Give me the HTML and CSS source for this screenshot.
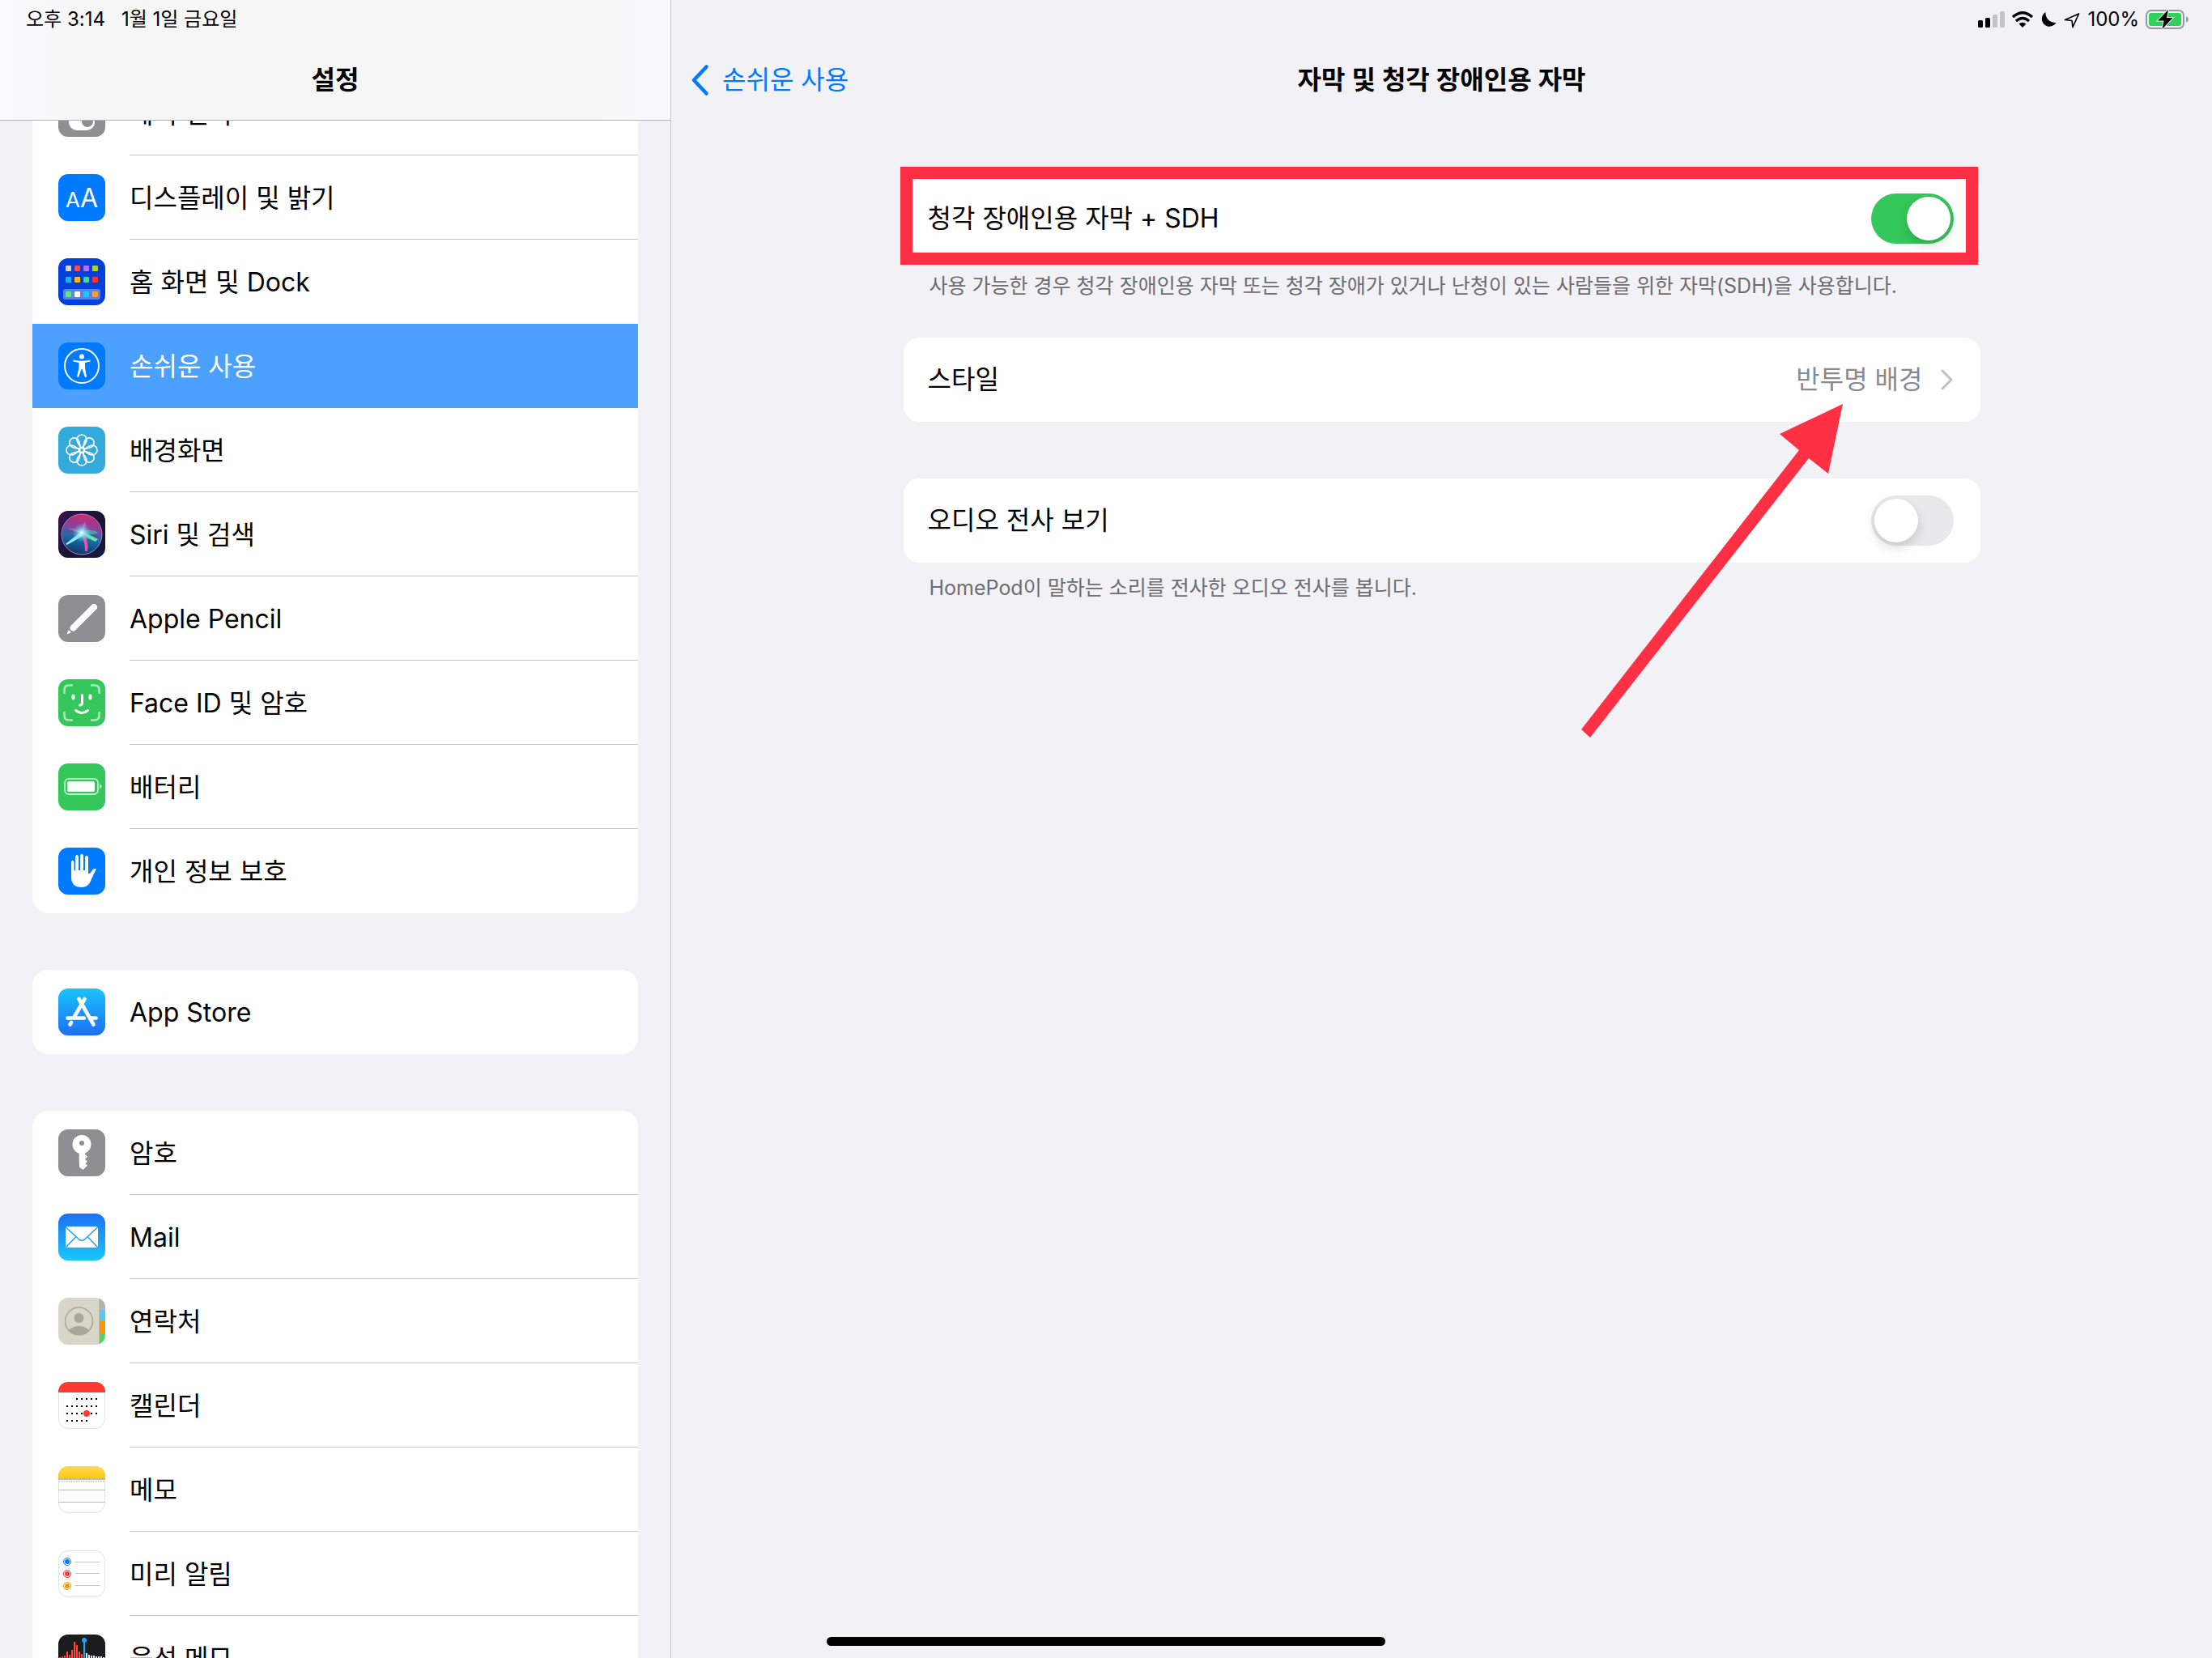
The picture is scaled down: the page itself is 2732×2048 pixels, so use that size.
FILE: index.html
```html
<!DOCTYPE html>
<html lang="ko">
<head>
    <meta charset="UTF-8">
    <meta name="viewport" content="width=device-width, initial-scale=1.0">
    <title>설정 - 자막 및 청각 장애인용 자막</title>
    <link rel="stylesheet" href="styles.css">
</head>
<body>
    <div class="screen">
        <aside class="sidebar">
            <header class="sidebar-header">
                <div class="status-bar">
                    <span>오후 3:14</span>
                    <span>1월 1일 금요일</span>
                </div>
                <h1 class="title">설정</h1>
            </header>
            <nav class="menu">
                <ul class="group group-scrolled">
                    <li><a class="item" href="#">
                        <svg class="icon" viewBox="0 0 58 58"><rect width="58" height="58" rx="12" fill="#8e8e93"/><rect x="13" y="30" width="32" height="20" rx="10" fill="#fff"/><circle cx="36" cy="39" r="7" fill="#8e8e93"/></svg>
                        <span class="label">제어 센터</span>
                    </a></li>
                    <li><a class="item" href="#">
                        <svg class="icon" viewBox="0 0 58 58"><rect width="58" height="58" rx="12" fill="#007aff"/><text x="9" y="41" font-size="26" fill="#fff">A</text><text x="27" y="41" font-size="32" fill="#fff">A</text></svg>
                        <span class="label">디스플레이 및 밝기</span>
                    </a></li>
                    <li><a class="item" href="#">
                        <svg class="icon" viewBox="0 0 58 58">
                            <rect width="58" height="58" rx="12" fill="#0440dc"/>
                            <rect x="6" y="38" width="46" height="13" rx="3" fill="#5b82e8"/>
                            <g>
                                <rect x="9" y="9" width="7" height="7" rx="1" fill="#d8d4cb"/><rect x="20" y="9" width="7" height="7" rx="1" fill="#fb4a5e"/><rect x="31" y="9" width="7" height="7" rx="1" fill="#bf6bf5"/><rect x="42" y="9" width="7" height="7" rx="1" fill="#b0d038"/>
                                <rect x="9" y="23" width="7" height="7" rx="1" fill="#12b8fb"/><rect x="20" y="23" width="7" height="7" rx="1" fill="#fdbc0a"/><rect x="31" y="23" width="7" height="7" rx="1" fill="#3bdc9b"/><rect x="42" y="23" width="7" height="7" rx="1" fill="#fb3430"/>
                                <rect x="9" y="41" width="7" height="7" rx="1" fill="#54ee6c"/><rect x="20" y="41" width="7" height="7" rx="1" fill="#fff"/><rect x="31" y="41" width="7" height="7" rx="1" fill="#12d0fb"/><rect x="42" y="41" width="7" height="7" rx="1" fill="#fd9a44"/>
                            </g>
                        </svg>
                        <span class="label">홈 화면 및 Dock</span>
                    </a></li>
                    <li><a class="item selected" href="#" aria-current="page">
                        <svg class="icon" viewBox="0 0 58 58"><rect width="58" height="58" rx="12" fill="#007aff"/><circle cx="29" cy="29" r="21" fill="none" stroke="#fff" stroke-width="2"/><circle cx="29" cy="17.500" r="3" fill="#fff"/><path d="M18.500 21.500Q29 24 39.500 21.500V23.500L33 25V31L35 42.500L33 43L29.500 33H28.500L25 43L23 42.500L25.500 31V25L18.500 23.500Z" fill="#fff"/></svg>
                        <span class="label">손쉬운 사용</span>
                    </a></li>
                    <li><a class="item" href="#">
                        <svg class="icon" viewBox="0 0 58 58">
                            <rect width="58" height="58" rx="12" fill="#34aadc"/>
                            <g fill="none" stroke="#fff" stroke-width="1.700">
                                <circle cx="29" cy="29" r="3"/>
                                <path id="petal" d="M29 26.500C25 22 23 19 23 16A6 6 0 0 1 35 16C35 19 33 22 29 26.500Z"/>
                                <use href="#petal" transform="rotate(45 29 29)"/><use href="#petal" transform="rotate(90 29 29)"/><use href="#petal" transform="rotate(135 29 29)"/><use href="#petal" transform="rotate(180 29 29)"/><use href="#petal" transform="rotate(225 29 29)"/><use href="#petal" transform="rotate(270 29 29)"/><use href="#petal" transform="rotate(315 29 29)"/>
                            </g>
                        </svg>
                        <span class="label">배경화면</span>
                    </a></li>
                    <li><a class="item" href="#">
                        <svg class="icon" viewBox="0 0 58 58">
                            <defs>
                                <linearGradient id="siri-bg" x1="0" y1="0" x2="1" y2="1"><stop offset="0" stop-color="#3c1050"/><stop offset=".5" stop-color="#1c1238"/><stop offset="1" stop-color="#101c3c"/></linearGradient>
                                <linearGradient id="siri-orb" x1=".6" y1="0" x2=".4" y2="1"><stop offset="0" stop-color="#d02870"/><stop offset=".35" stop-color="#86429c"/><stop offset=".6" stop-color="#1c6ca8"/><stop offset="1" stop-color="#143468"/></linearGradient>
                                <radialGradient id="siri-glow"><stop offset="0" stop-color="#fff"/><stop offset=".3" stop-color="#9ff0f8" stop-opacity=".8"/><stop offset="1" stop-color="#40c0e0" stop-opacity="0"/></radialGradient>
                            </defs>
                            <rect width="58" height="58" rx="12" fill="url(#siri-bg)"/>
                            <circle cx="29" cy="29" r="25" fill="url(#siri-orb)" stroke="#9a8cb4" stroke-width="1"/>
                            <path d="M29 26Q40 21 50 27Q40 31 29 28Z" fill="#3cc8b0" opacity=".7"/>
                            <path d="M29 25L9 41L11 42L30 31Z" fill="#8ff0ff"/>
                            <path d="M29 25L49 35L46 38L28 30Z" fill="#58e8b0"/>
                            <path d="M28 27Q33 38 33 50L36 50Q38 38 31 26Z" fill="#f050a8"/>
                            <path d="M28 27Q20 20 12 22Q20 26 28 27ZM30 27Q28 18 34 13Q34 22 30 27Z" fill="#e868b8" opacity=".6"/>
                            <circle cx="29" cy="27" r="12" fill="url(#siri-glow)"/>
                        </svg>
                        <span class="label">Siri 및 검색</span>
                    </a></li>
                    <li><a class="item" href="#">
                        <svg class="icon" viewBox="0 0 58 58"><rect width="58" height="58" rx="12" fill="#8e8e93"/><path d="M18.500 40.500L44 15" stroke="#fff" stroke-width="8" stroke-linecap="round"/><path d="M10.500 48.500L12.500 43.500Q15 43.500 15.500 46.500Z" fill="#fff"/></svg>
                        <span class="label">Apple Pencil</span>
                    </a></li>
                    <li><a class="item" href="#">
                        <svg class="icon" viewBox="0 0 58 58">
                            <rect width="58" height="58" rx="12" fill="#34c759"/>
                            <g fill="none" stroke="#fff" stroke-linecap="round">
                                <path d="M7.500 18V13Q7.500 7.500 13 7.500H18M40 7.500H45Q50.500 7.500 50.500 13V18M50.500 40V45Q50.500 50.500 45 50.500H40M18 50.500H13Q7.500 50.500 7.500 45V40" stroke-width="2.500" stroke-linecap="butt" opacity=".6"/>
                                <path d="M18.500 20.500V23.500M39.500 20.500V23.500" stroke-width="4"/>
                                <path d="M29.500 19.500V29.500Q29.500 32 26.500 32" stroke-width="3"/>
                                <path d="M21.500 38.500Q29 44.500 36.500 38.500" stroke-width="3"/>
                            </g>
                        </svg>
                        <span class="label">Face ID 및 암호</span>
                    </a></li>
                    <li><a class="item" href="#">
                        <svg class="icon" viewBox="0 0 58 58"><rect width="58" height="58" rx="12" fill="#34c759"/><rect x="8" y="19" width="41" height="19" rx="5" fill="none" stroke="#fff" stroke-width="1.800" opacity=".7"/><rect x="11" y="22" width="34" height="13" rx="2.500" fill="#fff"/><path d="M51 25.500Q53.500 26.500 53.500 28.500T51 31.500Z" fill="#fff" opacity=".7"/></svg>
                        <span class="label">배터리</span>
                    </a></li>
                    <li><a class="item" href="#">
                        <svg class="icon" viewBox="0 0 58 58"><rect width="58" height="58" rx="12" fill="#007aff"/><path d="M16 17.500Q17.500 14 19.500 17.500V28H21V11Q23 7 25 11V28H27V9.500Q29 6 31 9.500V28H33V11.500Q35 8 37 11.500V32Q39 33 41.500 28.500Q44 25 47 26.500Q43 34 40.500 40Q37.500 49 28.500 49Q16.500 49 16 37Z" fill="#fff"/></svg>
                        <span class="label">개인 정보 보호</span>
                    </a></li>
                </ul>

                <ul class="group">
                    <li><a class="item" href="#">
                        <svg class="icon" viewBox="0 0 58 58">
                            <defs><linearGradient id="store" x1="0" y1="0" x2="0" y2="1"><stop offset="0" stop-color="#1ac4fc"/><stop offset="1" stop-color="#1d6ff2"/></linearGradient></defs>
                            <rect width="58" height="58" rx="12" fill="url(#store)"/>
                            <g stroke="#fff" stroke-width="4.600" stroke-linecap="round"><path d="M32.500 13L19.500 35.500M16 42L14.500 44.500M25.500 13L43.500 44.500"/><path d="M11.500 36.500H32M40 36.500H46.500"/></g>
                            <path d="M31 24L38.500 37" stroke="#1c94f8" stroke-width="1" transform="translate(-2.500 1.500)"/>
                        </svg>
                        <span class="label">App Store</span>
                    </a></li>
                </ul>

                <ul class="group">
                    <li><a class="item" href="#">
                        <svg class="icon" viewBox="0 0 58 58"><rect width="58" height="58" rx="12" fill="#8e8e93"/><circle cx="29" cy="18.500" r="11.500" fill="#fff"/><path d="M25.500 27H33V31L36 33.500L33 37L36 39.500L33.500 42.500L36 44.500L30.500 50L26 46.500Z" fill="#fff"/><circle cx="29" cy="17" r="3" fill="#8e8e93"/></svg>
                        <span class="label">암호</span>
                    </a></li>
                    <li><a class="item" href="#">
                        <svg class="icon" viewBox="0 0 58 58">
                            <defs><linearGradient id="mail" x1="0" y1="0" x2="0" y2="1"><stop offset="0" stop-color="#1d6ff2"/><stop offset="1" stop-color="#1ac8fc"/></linearGradient></defs>
                            <rect width="58" height="58" rx="12" fill="url(#mail)"/><rect x="9" y="16" width="40" height="26" rx="1.500" fill="#fff"/><path d="M9 16.500L24.500 31Q29 35.500 33.500 31L49 16.500M9.500 41.500L21.500 29M48.500 41.500L36.500 29" fill="none" stroke="#1f9cf9" stroke-width="1.400"/>
                        </svg>
                        <span class="label">Mail</span>
                    </a></li>
                    <li><a class="item" href="#">
                        <svg class="icon" viewBox="0 0 58 58">
                            <defs><clipPath id="tile"><rect width="58" height="58" rx="12"/></clipPath><clipPath id="face"><circle cx="25.500" cy="29" r="17"/></clipPath></defs>
                            <g clip-path="url(#tile)">
                                <rect width="58" height="58" fill="#d8d5c9"/><rect x="51" width="7" height="15" fill="#b8b4ac"/><rect x="51" y="15" width="7" height="14" fill="#5ac8fa"/><rect x="51" y="29" width="7" height="16" fill="#ff9500"/><rect x="51" y="45" width="7" height="13" fill="#4cd964"/><path d="M51 0V58" stroke="#8f8c84" stroke-opacity=".5"/>
                            </g>
                            <circle cx="25.500" cy="29" r="17" fill="none" stroke="#aaa69d" stroke-width="1.500"/>
                            <g fill="#aaa69d" clip-path="url(#face)"><circle cx="25.500" cy="25" r="6"/><ellipse cx="25.500" cy="44" rx="14" ry="9"/></g>
                        </svg>
                        <span class="label">연락처</span>
                    </a></li>
                    <li><a class="item" href="#">
                        <svg class="icon" viewBox="0 0 58 58">
                            <rect x=".5" y=".5" width="57" height="57" rx="12" fill="#fff" stroke="#e2e2e4"/>
                            <rect width="58" height="13" fill="#ff3b30" clip-path="url(#tile)"/>
                            <g stroke="#000" stroke-width="2" stroke-dasharray="2 4"><path d="M22 21H48M10 30H48M10 39H48M10 48H36"/></g>
                            <circle cx="35" cy="39" r="4" fill="#ff3b30"/>
                        </svg>
                        <span class="label">캘린더</span>
                    </a></li>
                    <li><a class="item" href="#">
                        <svg class="icon" viewBox="0 0 58 58">
                            <defs><linearGradient id="notes" x1="0" y1="0" x2="0" y2="1"><stop offset="0" stop-color="#fedb56"/><stop offset="1" stop-color="#fdc70a"/></linearGradient></defs>
                            <rect x=".5" y=".5" width="57" height="57" rx="12" fill="#fff" stroke="#e2e2e4"/>
                            <rect width="58" height="15.500" fill="url(#notes)" clip-path="url(#tile)"/>
                            <path d="M0 16H58" stroke="#b0aca0" stroke-width="1.500"/><path d="M1 18.800H57" stroke="#bbb" stroke-width="1.500" stroke-dasharray="1.500 1.500"/><path d="M0 29.500H58M0 44.500H58" stroke="#bcbcc0"/>
                        </svg>
                        <span class="label">메모</span>
                    </a></li>
                    <li><a class="item" href="#">
                        <svg class="icon" viewBox="0 0 58 58">
                            <rect x=".5" y=".5" width="57" height="57" rx="12" fill="#fff" stroke="#e2e2e4"/>
                            <path d="M21 14.500H51M21 28.500H51M21 43.500H51" stroke="#c4c4c8"/>
                            <g fill="none"><circle cx="11" cy="14" r="4.500" stroke="#007aff"/><circle cx="11" cy="29" r="4.500" stroke="#ff3b30"/><circle cx="11" cy="44" r="4.500" stroke="#ff9500"/></g>
                            <circle cx="11" cy="14" r="3" fill="#007aff"/><circle cx="11" cy="29" r="3" fill="#ff3b30"/><circle cx="11" cy="44" r="3" fill="#ff9500"/>
                        </svg>
                        <span class="label">미리 알림</span>
                    </a></li>
                    <li><a class="item" href="#">
                        <svg class="icon" viewBox="0 0 58 58">
                            <rect width="58" height="58" rx="12" fill="#1c1c1e"/>
                            <path d="M2 28V32M5 27V33M8 26V34M11 21V39M14 25V35M17 19V41M20 9V51M23 13V47M26 21V39M29 24V36" stroke="#ff453a" stroke-width="2"/>
                            <path d="M35 23V37M38 25V35M41 26V34M44 26V34M47 27V33M50 27V33M53 27V33M56 28V32" stroke="#fff" stroke-width="1.800"/>
                            <path d="M32 6V52" stroke="#1fa8f8" stroke-width="2"/><circle cx="32" cy="7" r="3" fill="#1fa8f8"/>
                        </svg>
                        <span class="label">음성 메모</span>
                    </a></li>
                </ul>
            </nav>
        </aside>

        <main class="detail">
            <div class="status-bar status-right">
                <svg class="status-icons" viewBox="0 0 100 32" width="100" height="32" aria-label="셀룰러, Wi-Fi, 방해금지 모드">
                    <rect x="3" y="17" width="6" height="9" rx="1.500"/><rect x="12" y="14" width="6" height="12" rx="1.500"/><g fill="#c4c4c8"><rect x="21" y="10" width="6" height="16" rx="1.500"/><rect x="30" y="6" width="6" height="20" rx="1.500"/></g>
                    <g fill="none" stroke="#000" stroke-width="3.400"><path d="M46 13Q58 2.500 70 13"/><path d="M50 18Q58 11 66 18"/></g><path d="M53.500 21.500Q58 18 62.500 21.500L58 26Z"/>
                    <path d="M86.500 7A9.500 9.500 0 1 0 99.500 20A12 12 0 0 1 86.500 7Z"/>
                </svg>
                <svg class="status-icons" viewBox="0 0 22 32" width="22" height="32" aria-label="위치"><path d="M2.500 16.500L19.500 9L12 25.500L11 17.500Z" fill="none" stroke="#000" stroke-width="1.700" stroke-linejoin="round"/></svg>
                <span>100%</span>
                <svg class="status-icons" viewBox="0 0 54 32" width="54" height="32" aria-label="충전 중">
                    <rect x="1" y="5" width="46" height="22" rx="6" fill="none" stroke="#98989d" stroke-width="2"/><rect x="4" y="8" width="40" height="16" rx="3" fill="#30d158"/><path d="M50 12Q53 13.500 53 16T50 20Z" fill="#98989d"/>
                    <path d="M28 4L15 17.500H22.500L20.500 28L33.500 14H26Z" stroke="#f2f1f6" stroke-width="2" paint-order="stroke"/>
                </svg>
            </div>
            <header class="detail-header">
                <a class="back" href="#">
                    <svg viewBox="0 0 24 40" width="24" height="40" fill="none"><path d="M19.500 3.500L4 20L19.500 36.500" stroke="currentColor" stroke-width="4.500" stroke-linecap="round" stroke-linejoin="round"/></svg>
                    <span>손쉬운 사용</span>
                </a>
                <h2 class="title">자막 및 청각 장애인용 자막</h2>
            </header>

            <div class="settings">
                <section class="highlight">
                    <div class="row card">
                        <label for="sdh">청각 장애인용 자막 + SDH</label>
                        <input class="switch" type="checkbox" role="switch" id="sdh" checked>
                    </div>
                </section>
                <p class="note">사용 가능한 경우 청각 장애인용 자막 또는 청각 장애가 있거나 난청이 있는 사람들을 위한 자막(SDH)을 사용합니다.</p>

                <a class="row card style-row" href="#">
                    <span>스타일</span>
                    <span class="value">반투명 배경
                        <svg viewBox="0 0 16 28" width="16" height="28" fill="none"><path d="M2 3L13 14L2 25" stroke="#c0c0c4" stroke-width="3" stroke-linecap="round" stroke-linejoin="round"/></svg>
                    </span>
                </a>

                <div class="row card">
                    <label for="transcript">오디오 전사 보기</label>
                    <input class="switch" type="checkbox" role="switch" id="transcript">
                </div>
                <p class="note">HomePod이 말하는 소리를 전사한 오디오 전사를 봅니다.</p>

                <svg class="arrow" viewBox="0 0 324 413" width="324" height="413" aria-hidden="true"><path d="M324 0L246 37L270 57L1 402L12 412L282 67L306 86Z" fill="#ff3044"/></svg>
            </div>
        </main>
        <div class="home-indicator"></div>
    </div>
</body>
</html>
```

FILE: styles.css
```css
* {
    box-sizing: border-box;
}
body {
    margin: 0;
    font-family: Inter, "Noto Sans CJK KR", sans-serif;
    font-size: 32px;
    line-height: 48px;
    color: #000;
    background-color: #f2f1f6;
}
a {
    color: inherit;
    text-decoration: none;
}
.screen {
    position: relative;
    display: flex;
    height: 100vh;
    overflow: hidden;
}

/* sidebar */
.sidebar {
    display: flex;
    flex-direction: column;
    flex: 0 0 829px;
    border-right: 1px solid #c6c6c8;
}
.sidebar-header {
    flex: none;
    height: 149px;
    background: linear-gradient(to right, #fbfbfd, #f6f6f7 12%, #f6f6f7 88%, #fafafc);
    border-bottom: 1px solid #b4b4b8;
}
.status-bar {
    display: flex;
    align-items: center;
    gap: 20px;
    height: 48px;
    padding: 0 32px;
    font-size: 24px;
}
.title {
    margin: 0;
    padding-top: 27px;
    font-size: 32px;
    font-weight: 600;
    text-align: center;
}
.menu {
    flex: 1;
    min-height: 0;
    padding: 0 40px;
    overflow: hidden;
}
.group {
    margin: 0 0 70px;
    padding: 0;
    list-style: none;
    background-color: #fff;
    border-radius: 20px;
    overflow: hidden;
}
/* list is scrolled part of the way under the header */
.group-scrolled {
    margin-top: -61px;
}
.item {
    display: flex;
    align-items: center;
    gap: 30px;
    height: 104px;
    padding-left: 32px;
}
.icon {
    flex: none;
    width: 58px;
    height: 58px;
}
.label {
    flex: 1;
    height: 104px;
    line-height: 105px;
    border-bottom: 1px solid #c6c6c8;
}
li:last-child .label,
.selected .label,
li:has(+ li .selected) .label {
    border-bottom-color: transparent;
}
.selected {
    color: #fff;
    background-color: #4ca0ff;
}

/* detail pane */
.detail {
    flex: 1;
    min-width: 0;
}
.status-right {
    justify-content: flex-end;
    gap: 8px;
    padding-right: 28px;
}
.detail-header {
    display: grid;
    grid-template-columns: 1fr auto 1fr;
    height: 100px;
    padding: 0 24px;
}
.back {
    display: flex;
    align-items: center;
    gap: 15px;
    height: 48px;
    margin-top: 27px;
    color: #007aff;
}
.settings {
    position: relative;
    max-width: 1330px;
    margin: 70px auto 0;
}
.row {
    display: flex;
    align-items: center;
    justify-content: space-between;
    height: 104px;
    padding: 0 33px 0 30px;
}
.card {
    background-color: #fff;
    border-radius: 20px;
}
.highlight {
    position: relative;
}
.highlight::after {
    content: "";
    position: absolute;
    inset: -12px 3px -5px -4px;
    border: 15px solid #ff3044;
    pointer-events: none;
}
.note {
    margin: 0;
    padding: 11px 32px 0;
    font-size: 25px;
    line-height: 40px;
    color: #6d6d72;
}
.style-row {
    margin: 44px 0 70px;
}
.value {
    display: flex;
    align-items: center;
    gap: 22px;
    color: #8a8a8e;
}
.switch {
    appearance: none;
    width: 102px;
    height: 62px;
    margin: 0;
    padding: 4px;
    border-radius: 31px;
    background-color: #e9e9eb;
}
.switch::before {
    content: "";
    display: block;
    width: 54px;
    height: 54px;
    border-radius: 50%;
    background-color: #fff;
    box-shadow: 0 6px 14px rgba(0, 0, 0, 0.15);
}
.switch:checked {
    background-color: #34c759;
}
.switch:checked::before {
    margin-left: auto;
}
.arrow {
    position: absolute;
    top: 281px;
    right: 170px;
}
.home-indicator {
    position: absolute;
    bottom: 15px;
    left: 50%;
    width: 690px;
    height: 11px;
    border-radius: 6px;
    background-color: #000;
    transform: translateX(-50%);
}
```
